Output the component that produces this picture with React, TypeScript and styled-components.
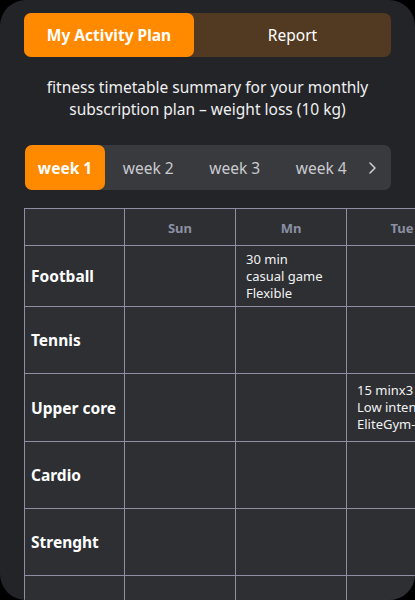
import React, { useState } from 'react';
import styled, { createGlobalStyle } from 'styled-components';

const GlobalStyle = createGlobalStyle`
  html, body {
    margin: 0;
    padding: 0;
    background: #000;
  }
  * {
    box-sizing: border-box;
  }
`;

const Card = styled.div`
  width: 415px;
  height: 600px;
  background: #232428;
  border-radius: 26px;
  overflow: hidden;
  padding-top: 13px;
  font-family: 'Noto Sans', 'Open Sans', sans-serif;
  color: #f2f2f2;
`;

const TabBar = styled.div`
  margin: 0 24px;
  height: 44px;
  display: flex;
  background: #523a22;
  border-radius: 7px;
`;

const Tab = styled.div<{ active?: boolean }>`
  flex: ${({ active }) => (active ? '0 0 170px' : '1')};
  display: flex;
  align-items: center;
  justify-content: center;
  border-radius: 7px;
  background: ${({ active }) => (active ? '#ff8a00' : 'transparent')};
  color: #fff;
  font-size: 15.5px;
  font-weight: ${({ active }) => (active ? 700 : 400)};
  cursor: pointer;
`;

const Subtitle = styled.p`
  margin: 19px 0 0;
  text-align: center;
  font-size: 15.5px;
  line-height: 22px;
  color: #f0f0f0;
`;

const WeekBar = styled.div`
  margin: 25px 24px 0 25px;
  height: 45px;
  display: flex;
  align-items: stretch;
  background: #393a3e;
  border-radius: 7px;
`;

const WeekItem = styled.div<{ active?: boolean }>`
  flex: 0 0 ${({ active }) => (active ? '80px' : '86.5px')};
  display: flex;
  align-items: center;
  justify-content: center;
  border-radius: 7px;
  background: ${({ active }) => (active ? '#ff8a00' : 'transparent')};
  color: ${({ active }) => (active ? '#fff' : '#c9cace')};
  font-size: 15.5px;
  font-weight: ${({ active }) => (active ? 700 : 400)};
  cursor: pointer;
`;

const Chevron = styled.div`
  display: flex;
  align-items: center;
  padding-left: 2px;
  color: #c9cace;
`;

const TableWrap = styled.div`
  margin: 18px 0 0 24px;
  overflow: hidden;
`;

const Table = styled.table`
  border-collapse: collapse;
  background: #2d2f33;
  table-layout: fixed;
  width: 877px;
`;

const Th = styled.th`
  border: 1.5px solid #8d90a2;
  height: 37px;
  padding-top: 3px;
  color: #8b90a2;
  font-size: 13px;
  font-weight: 700;
  text-align: center;
`;

const RowLabel = styled.td`
  border: 1.5px solid #8d90a2;
  padding: 0 6px;
  font-size: 15.5px;
  font-weight: 700;
  color: #fff;
  white-space: nowrap;
  overflow: hidden;
`;

const Cell = styled.td`
  border: 1.5px solid #8d90a2;
  padding: 0 10px;
  font-size: 13px;
  line-height: 17px;
  color: #f2f2f2;
  white-space: nowrap;
  overflow: hidden;
`;

const days = ['Sun', 'Mn', 'Tue', 'Wed', 'Thu', 'Fri', 'Sat'];

const rows: { name: string; height: number; cells: Record<number, string[]> }[] = [
  { name: 'Football', height: 61, cells: { 1: ['30 min', 'casual game', 'Flexible'] } },
  { name: 'Tennis', height: 67, cells: {} },
  { name: 'Upper core', height: 68, cells: { 2: ['15 minx3', 'Low intensity', 'EliteGym-A'] } },
  { name: 'Cardio', height: 67, cells: {} },
  { name: 'Strenght', height: 67, cells: {} },
  { name: '', height: 67, cells: {} },
];

const App = () => {
  const [tab, setTab] = useState(0);
  const [week, setWeek] = useState(0);

  return (
    <>
      <GlobalStyle />
      <Card>
        <TabBar>
          <Tab active={tab === 0} onClick={() => setTab(0)}>My Activity Plan</Tab>
          <Tab active={tab === 1} onClick={() => setTab(1)}>Report</Tab>
        </TabBar>

        <Subtitle>
          fitness timetable summary for your monthly
          <br />
          subscription plan – weight loss (10 kg)
        </Subtitle>

        <WeekBar>
          {['week 1', 'week 2', 'week 3', 'week 4'].map((w, i) => (
            <WeekItem key={w} active={week === i} onClick={() => setWeek(i)}>
              {w}
            </WeekItem>
          ))}
          <Chevron>
            <svg width="10" height="14" viewBox="0 0 10 14" fill="none">
              <path d="M3 2l5 5-5 5" stroke="currentColor" strokeWidth="1.6" strokeLinecap="round" strokeLinejoin="round" />
            </svg>
          </Chevron>
        </WeekBar>

        <TableWrap>
          <Table>
            <colgroup>
              <col style={{ width: 100 }} />
              {days.map((d) => (
                <col key={d} style={{ width: 111 }} />
              ))}
            </colgroup>
            <thead>
              <tr>
                <Th />
                {days.map((d) => (
                  <Th key={d}>{d}</Th>
                ))}
              </tr>
            </thead>
            <tbody>
              {rows.map((r, ri) => (
                <tr key={ri} style={{ height: r.height }}>
                  <RowLabel>{r.name}</RowLabel>
                  {days.map((d, ci) => (
                    <Cell key={d}>
                      {(r.cells[ci] || []).map((l, li) => (
                        <div key={li}>{l}</div>
                      ))}
                    </Cell>
                  ))}
                </tr>
              ))}
            </tbody>
          </Table>
        </TableWrap>
      </Card>
    </>
  );
};

export default App;
